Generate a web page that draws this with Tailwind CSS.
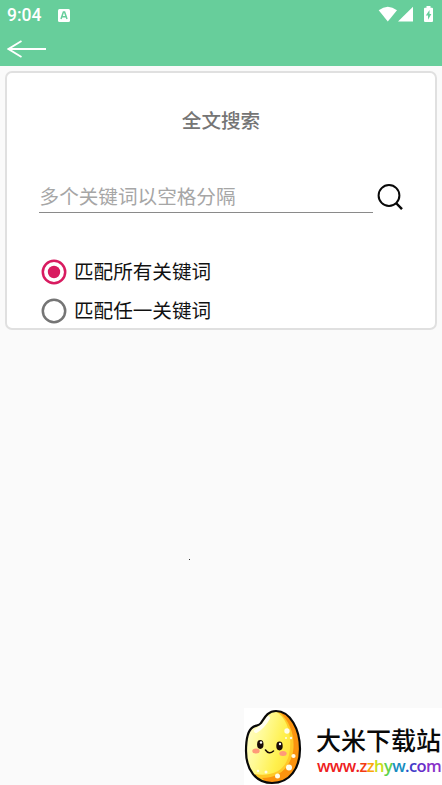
<!DOCTYPE html>
<html lang="zh-CN">
<head>
<meta charset="utf-8">
<title>全文搜索</title>
<script src="https://cdn.jsdelivr.net/npm/@tailwindcss/browser@4"></script>
</head>
<body class="bg-[#fafafa] font-['Roboto','Noto_Sans_CJK_SC',sans-serif]">
<div class="flex h-[785px] w-[442px] flex-col overflow-hidden">
  <header class="h-[66px] shrink-0 bg-[#67ce9b] text-white">
    <div class="flex h-[31px] items-center pl-[7px] pr-[7px]">
      <span class="w-[51px] text-[17.5px] leading-[31px] font-medium">9:04</span>
      <svg class="h-[13px] w-[12px]" viewBox="0 0 12 13"><rect width="12" height="13" rx="1.5" fill="#fff"/><path d="M3 10 5.4 3h1.2L9 10M4 7.8h4" fill="none" stroke="#67ce9b" stroke-width="1.5"/></svg>
      <span class="grow"></span>
      <svg class="-mt-[2px] h-[18px] w-[57px]" viewBox="0 0 57 18" fill="#fff"><path d="M.7 4.2Q9.8-2.8 19 4.2L9.8 15.6Z" /><path d="M20 15.5h15V.8Z"/><path d="M47 1.7h1.5V0h4v1.7H54q1 0 1 1v12q0 1.2-1 1.2h-7q-1 0-1-1.2v-12q0-1 1-1Z"/><path d="M51.5 4 47.8 9.5h2.2v4.3L53.4 8h-1.9Z" fill="#67ce9b"/></svg>
    </div>
    <div class="flex h-[35px] items-center pl-[7px]">
      <svg class="h-[18px] w-[40px]" viewBox="0 0 40 18" fill="none" stroke="#fff" stroke-width="1.8"><path d="M14.5 1 1.5 9l13 8M1.5 9H39"/></svg>
    </div>
  </header>
  <main class="mx-[5px] mt-[5px] h-[259px] shrink-0 rounded-[7px] border-2 border-[#e0e0e0] bg-white px-[33px] pt-[33px]">
    <h1 class="text-center text-[19.6px] leading-[32px] font-medium text-[#757575]">全文搜索</h1>
    <div class="mt-[41px] flex h-[46px]">
      <div class="mr-[3px] -ml-px h-[34px] w-[334px] shrink-0 border-b-[1.5px] border-[#8a8a8a] pt-[2px] pl-[0.6px] text-[19.6px] leading-[34px] font-normal text-[#a6a6a6]">多个关键词以空格分隔</div>
      <svg class="mt-[4px] h-[28px] w-[28px] shrink-0" viewBox="0 0 28 28" fill="none" stroke="#080808" stroke-width="2"><circle cx="13" cy="12.5" r="10.4"/><path d="m20 20 6 6.2" stroke-width="2.5"/></svg>
    </div>
    <div class="mt-[27px] flex h-[39px] items-center text-[19.6px] text-[#111]">
      <svg class="mr-[7px] ml-px h-[26px] w-[26px]" viewBox="0 0 26 26"><circle cx="13" cy="13" r="11.2" fill="none" stroke="#d81b60" stroke-width="2.5"/><circle cx="13" cy="13" r="6.2" fill="#d81b60"/></svg>
      <span class="pt-[2px]">匹配所有关键词</span>
    </div>
    <div class="flex h-[39px] items-center text-[19.6px] text-[#111]">
      <svg class="mr-[7px] ml-px h-[26px] w-[26px]" viewBox="0 0 26 26"><circle cx="13" cy="13" r="11.2" fill="none" stroke="#757575" stroke-width="2.5"/></svg>
      <span class="pt-[2px]">匹配任一关键词</span>
    </div>
  </main>
  <div class="mt-[229px] ml-[189px] h-px w-px shrink-0 bg-[#333]"></div>
  <footer class="mt-auto ml-auto flex h-[77px] w-[198px] bg-white">
    <svg class="h-[77px] w-[60px] shrink-0" viewBox="0 0 60 77">
      <defs>
        <linearGradient id="rice" x1="0" y1=".3" x2="1" y2=".7"><stop offset="0" stop-color="#fffdd0"/><stop offset=".3" stop-color="#fffa92"/><stop offset=".6" stop-color="#fff04d"/><stop offset="1" stop-color="#ffcf27"/></linearGradient>
        <clipPath id="grain"><path d="M17 15C20 11 23 3 32 3c14 0 24 18 24 38 0 19-10 34-28 34C12 75 2 62 2 43 2 31 4 22 9 19c3-2 6-1 8-4Z"/></clipPath>
      </defs>
      <g clip-path="url(#grain)">
        <path d="M0 0h60v77H0Z" fill="url(#rice)"/>
        <path d="M30 2C44 10 49 28 45 47 41 62 30 69 10 66L20 77H60V0Z" fill="#ffc928"/>
        <path d="M33 2C49 14 52 35 48 48 43 63 33 70 18 70L25 77H60V0Z" fill="#fb930f"/>
        <path d="M12 23Q19 19 24 10" fill="none" stroke="#fffef0" stroke-width="4" stroke-linecap="round"/>
        <g fill="#fffde9"><circle cx="43" cy="23" r="2.7"/><circle cx="47" cy="30" r="1.2"/><circle cx="42" cy="30" r="1"/><circle cx="49.5" cy="48" r="2.1"/><circle cx="45" cy="59.5" r="3"/><circle cx="33.5" cy="68" r="2.5"/><circle cx="22" cy="64" r="1.5"/><circle cx="14" cy="63" r="1.3"/></g>
      </g>
      <path d="M17 15C20 11 23 3 32 3c14 0 24 18 24 38 0 19-10 34-28 34C12 75 2 62 2 43 2 31 4 22 9 19c3-2 6-1 8-4Z" fill="none" stroke="#090909" stroke-width="2.2"/>
      <ellipse cx="12" cy="43" rx="3.7" ry="2.5" fill="#ff9a79"/><ellipse cx="39" cy="45.5" rx="3.7" ry="2.5" fill="#ff9a79"/>
      <g fill="#190b08"><ellipse cx="16.3" cy="36.5" rx="3.2" ry="4.4"/><ellipse cx="35.5" cy="38" rx="3.2" ry="4.4"/></g>
      <g fill="#fff"><circle cx="17" cy="34.5" r="1.2"/><circle cx="36" cy="36" r="1.2"/></g>
      <path d="M21.5 42q3.5 5 8 1" fill="none" stroke="#190b08" stroke-width="1.6" stroke-linecap="round"/>
    </svg>
    <div class="ml-[12px] pt-[18px] whitespace-nowrap">
      <div class="text-[25px] leading-[31px] font-medium text-[#090909]">大米下载站</div>
      <div class="ml-px font-['Open_Sans',sans-serif] text-[16.5px] leading-[18px] font-semibold tracking-[-0.6px]"><span class="text-[#ee2020]">www.</span><span class="text-[#f33c15]">z</span><span class="text-[#fba40c]">z</span><span class="text-[#c7df19]">h</span><span class="text-[#60d24b]">y</span><span class="text-[#168dc0]">w</span><span class="text-[#2856cb]">.</span><span class="text-[#403bc8]">c</span><span class="text-[#652dc9]">o</span><span class="text-[#8931c9]">m</span></div>
    </div>
  </footer>
</div>
</body>
</html>
